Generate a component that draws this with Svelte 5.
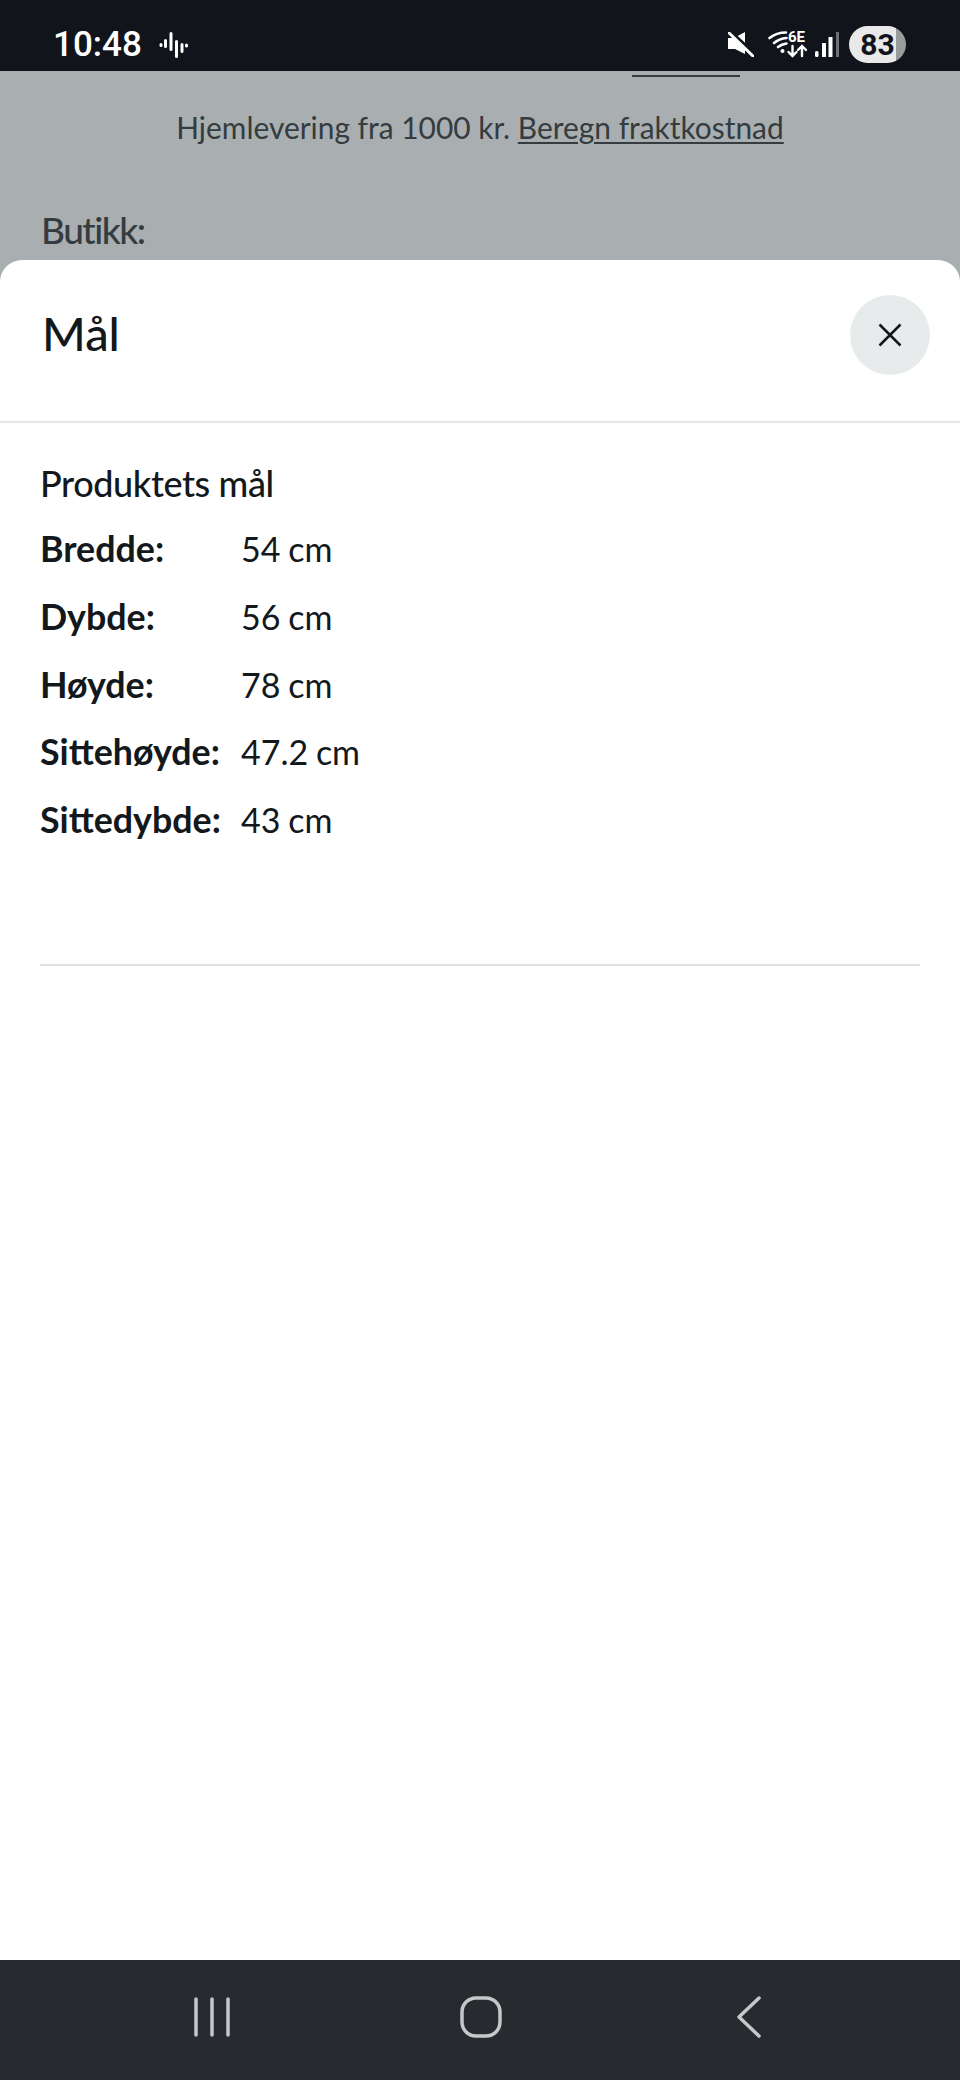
<script lang="ts">
	// Product measurements shown in the sheet
	const rows = [
		{ label: "Bredde:", value: "54 cm" },
		{ label: "Dybde:", value: "56 cm" },
		{ label: "Høyde:", value: "78 cm" },
		{ label: "Sittehøyde:", value: "47.2 cm" },
		{ label: "Sittedybde:", value: "43 cm" },
	];
</script>

<div class="screen">
	<div class="statusBar">
		<div class="left">
			<span class="time">10:48</span>
			<svg class="wave" viewBox="0 0 30 26" width="30" height="26" aria-hidden="true">
				<path d="M2 12.500v1M6.500 8.500v6M12 1.500v16M17.500 9.500v15M23 12.500v7M27.500 13v1" stroke="#fff" stroke-width="3" stroke-linecap="round" />
			</svg>
		</div>
		<div class="right">
			<svg class="mute" viewBox="0 0 26 25" width="26" height="25" aria-hidden="true">
				<path d="M17 0v22l-10-5H0V6h6z" fill="#fff" />
				<path d="M2 0l24 22" stroke="#12141b" stroke-width="4.500" />
				<path d="M1 1l24 23" stroke="#fff" stroke-width="3" stroke-linecap="round" />
			</svg>
			<svg class="wifi" viewBox="0 -6 42 33" width="42" height="33" aria-hidden="true">
				<g fill="none" stroke="#fff" stroke-linecap="round">
					<path d="M1.500 7C6 3.500 11 1.500 18 1.500" stroke-width="2.600" />
					<path d="M6 12c3.500-3 7-4.500 12.500-5" stroke-width="2.600" />
					<path d="M10 16c2.500-2 5-3 8.500-3.500" stroke-width="2.600" />
					<path d="M24.500 15v10M20.500 21l4 4 4-4" stroke-width="2.400" />
					<path d="M34 25V15M30 19l4-4 4 4" stroke-width="2.400" />
				</g>
				<circle cx="14.500" cy="20" r="2" fill="#fff" />
				<text x="20" y="11" class="sixE">6E</text>
			</svg>
			<svg class="signal" viewBox="0 0 24 25" width="24" height="25" aria-hidden="true">
				<rect x="0" y="19" width="3.500" height="6" rx="1.500" fill="#fff" />
				<rect x="7" y="11" width="4" height="14" rx="0.500" fill="#fff" />
				<rect x="13.500" y="5" width="4" height="20" rx="0.500" fill="#fff" />
				<rect x="21" y="0" width="3" height="25" fill="#6e7072" />
			</svg>
			<div class="battery"><span class="level">83</span></div>
		</div>
	</div>

	<div class="behind">
		<div class="linkStub"></div>
		<p class="delivery">
			Hjemlevering fra 1000 kr. <span class="link">Beregn fraktkostnad</span>
		</p>
		<h2 class="store">Butikk:</h2>
	</div>

	<div class="sheet">
		<div class="sheetHead">
			<h1>Mål</h1>
			<button class="close" aria-label="Lukk">
				<svg viewBox="0 0 24 24" width="24" height="24">
					<path d="M1.500 1.500l21 21M22.500 1.500l-21 21" stroke="#12181b" stroke-width="2.500" fill="none" />
				</svg>
			</button>
		</div>
		<div class="sheetBody">
			<h3>Produktets mål</h3>
			<dl>
				{#each rows as row}
					<dt>{row.label}</dt>
					<dd>{row.value}</dd>
				{/each}
			</dl>
			<hr />
		</div>
	</div>

	<div class="navBar">
		<svg viewBox="0 0 40 40" width="40" height="40" aria-hidden="true">
			<path d="M4 2v36M20 2v36M36 2v36" stroke="#c6c7c9" stroke-width="3.500" stroke-linecap="round" />
		</svg>
		<svg class="home" viewBox="0 0 42 42" width="42" height="42" aria-hidden="true">
			<rect x="2" y="2" width="38" height="38" rx="14" fill="none" stroke="#c6c7c9" stroke-width="3.500" />
		</svg>
		<svg class="back" viewBox="0 0 26 42" width="26" height="42" aria-hidden="true">
			<path d="M23 2L3 21l20 19" fill="none" stroke="#c6c7c9" stroke-width="3.500" stroke-linecap="round" stroke-linejoin="round" />
		</svg>
	</div>
</div>

<style>
	:global(body) {
		margin: 0;
		background: #fff;
	}

	.screen {
		display: flex;
		flex-direction: column;
		width: 960px;
		height: 2080px;
		overflow: hidden;
		background: #a9aeb0;
		font-family: Lato, "Noto Sans", sans-serif;
	}

	.statusBar {
		display: flex;
		align-items: center;
		justify-content: space-between;
		flex: 0 0 71px;
		box-sizing: border-box;
		padding: 18px 54px 0 53px;
		background: #12141b;
		color: #fff;
	}

	.left,
	.right {
		display: flex;
		align-items: center;
	}

	.time {
		font-family: Roboto, sans-serif;
		font-size: 35px;
		font-weight: 500;
	}

	.wave {
		margin-left: 17px;
	}

	.wifi {
		margin: -6px 0 0 14px;
	}

	.signal {
		margin-left: 5px;
	}

	.sixE {
		font-family: Roboto, sans-serif;
		font-size: 15px;
		font-weight: 700;
		fill: #fff;
	}

	.battery {
		width: 57px;
		height: 37px;
		margin-left: 10px;
		border-radius: 19px;
		background: linear-gradient(90deg, #e9e9e9 82%, #9a9b9d 82%);
		color: #12141b;
		font-family: Roboto, sans-serif;
		font-size: 30px;
		font-weight: 700;
		line-height: 37px;
		text-align: center;
	}

	.behind {
		flex: 0 0 189px;
		overflow: hidden;
		color: #343c40;
	}

	.linkStub {
		width: 108px;
		height: 2px;
		margin: 4px 0 0 632px;
		background: #343c40;
	}

	.delivery {
		margin: 30px 0 0;
		font-size: 29.900px;
		line-height: 40px;
		text-align: center;
	}

	.link {
		text-decoration: underline;
		text-underline-offset: 3px;
		text-decoration-thickness: 2px;
	}

	.store {
		margin: 61px 0 0 41px;
		font-size: 37px;
		font-weight: 500;
		letter-spacing: -1.500px;
		line-height: 44px;
	}

	.sheet {
		flex: 1;
		border-radius: 22px 22px 0 0;
		background: #fff;
		color: #12181b;
	}

	.sheetHead {
		display: flex;
		align-items: center;
		justify-content: space-between;
		height: 150px;
		padding: 0 30px 11px 42px;
		border-bottom: 2px solid #e6e8e8;
	}

	h1 {
		margin: 0 0 5px;
		font-size: 47px;
		font-weight: 500;
	}

	.close {
		display: flex;
		align-items: center;
		justify-content: center;
		width: 80px;
		height: 80px;
		padding: 0;
		border: none;
		border-radius: 50%;
		background: #e8ebec;
	}

	.sheetBody {
		padding: 0 40px;
	}

	h3 {
		margin: 36px 0 8px;
		font-size: 36px;
		font-weight: 500;
		letter-spacing: -0.400px;
		line-height: 48px;
	}

	dl {
		display: grid;
		grid-template-columns: 201px 1fr;
		grid-auto-rows: 67.700px;
		align-items: center;
		margin: 0;
		font-size: 34px;
	}

	dt {
		font-size: 35.800px;
		font-weight: 700;
	}

	dd {
		margin: 0;
		word-spacing: -1px;
	}

	hr {
		height: 2px;
		margin: 111px 0 0;
		border: none;
		background: #dfe1e1;
	}

	.navBar {
		display: flex;
		align-items: center;
		flex: 0 0 120px;
		box-sizing: border-box;
		padding: 0 0 6px 192px;
		background: #292a30;
	}

	.home {
		margin-left: 228px;
	}

	.back {
		margin-left: 234px;
	}
</style>
